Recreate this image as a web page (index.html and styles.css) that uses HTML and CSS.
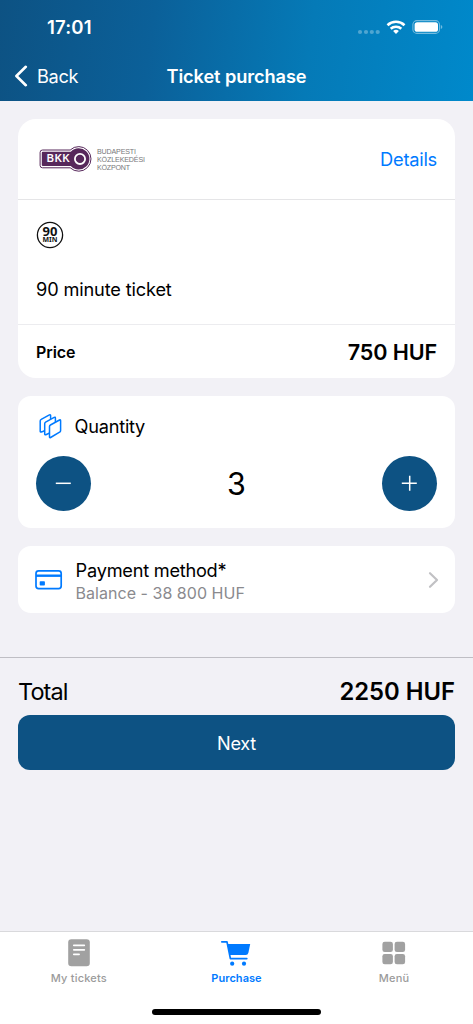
FILE: index.html
```html
<!DOCTYPE html>
<html lang="en">
<head>
<meta charset="utf-8">
<title>Ticket purchase</title>
<link rel="stylesheet" href="styles.css">
</head>
<body>
<div class="screen">
  <header class="header">
    <div class="status">
      <span class="clock">17:01</span>
      <svg class="status-icons" width="88" height="18" viewBox="0 0 88 18" fill="#fff">
        <g opacity=".3"><circle cx="4" cy="14" r="2.1"/><circle cx="10" cy="14" r="2.1"/><circle cx="15.8" cy="14" r="2.1"/><circle cx="21.7" cy="14" r="2.1"/></g>
        <g fill="none" stroke="#fff" stroke-width="2.6"><path d="M31.5 7.2a12.3 12.3 0 0 1 17 0"/><path d="M34.7 10.8a7.7 7.7 0 0 1 10.6 0"/></g>
        <path d="M40 16l-2.9-3a4.3 4.3 0 0 1 5.8 0z"/>
        <rect x="56.9" y="2.6" width="26.6" height="12.8" rx="4" fill="none" stroke="#fff" stroke-opacity=".45" stroke-width="1.1"/>
        <rect x="58.6" y="4.2" width="23.4" height="9.6" rx="2.6"/>
        <path d="M84.8 6.9q1.6.6 1.6 2.1t-1.6 2.1z" opacity=".45"/>
      </svg>
    </div>
    <nav class="navbar">
      <a class="back"><svg width="14" height="22" viewBox="0 0 14 22" fill="none" stroke="#fff" stroke-width="2.6" stroke-linecap="round" stroke-linejoin="round"><path d="M11.8 1.8L2.4 11l9.4 9.2"/></svg><span>Back</span></a>
      <h1 class="title">Ticket purchase</h1>
    </nav>
  </header>

  <main class="content">
    <section class="card ticket">
      <div class="operator">
        <svg class="logo" width="110" height="28" viewBox="0 0 110 28">
          <path fill="#fff" stroke="#57285b" stroke-width="1" d="M3.5 5H31.2A12.3 12.3 0 1 1 31.2 22.8H3.5Q1.1 22.8 1.1 20.4V7.4Q1.1 5 3.5 5Z"/>
          <path fill="#57285b" d="M3.9 6.7H31.8A10.7 10.7 0 1 1 31.8 21.1H3.9Q2.8 21.1 2.8 20V7.8Q2.8 6.7 3.9 6.7Z"/>
          <circle cx="41" cy="13.9" r="5.1" fill="none" stroke="#fff" stroke-width="1.8"/>
          <text class="logo-mark" x="7.8" y="17.2" textLength="23">BKK</text>
          <g class="logo-name"><text x="58" y="8.6" textLength="39">BUDAPESTI</text><text x="58" y="16.6" textLength="48">KÖZLEKEDÉSI</text><text x="58" y="24.6" textLength="33">KÖZPONT</text></g>
        </svg>
        <a class="details">Details</a>
      </div>
      <div class="product">
        <svg class="duration" width="28" height="28" viewBox="0 0 28 28"><circle cx="14" cy="14" r="12.6" fill="none" stroke="#111" stroke-width="1.3"/><text class="dur" text-anchor="middle"><tspan class="dur-num" x="14" y="15">90</tspan><tspan class="dur-unit" x="14" y="21.4">MIN</tspan></text></svg>
        <div class="product-name">90 minute ticket</div>
      </div>
      <div class="price"><span class="price-label">Price</span><span class="price-value">750 HUF</span></div>
    </section>

    <section class="card quantity">
      <div class="quantity-head">
        <svg width="28" height="28" viewBox="0 0 28 28" fill="#fff" stroke="#007aff" stroke-width="1.5" stroke-linejoin="round"><path d="M5.2 7.4L13.4 2.9Q14.6 2.4 14.6 3.6V15L7.5 19.2L5.2 20Q4.2 20.3 4.2 19.2V9Q4.2 7.9 5.2 7.4Z"/><path d="M9.6 10.1L18.2 5.4Q19.4 4.8 19.4 6V17L12 21.8L9.8 22.7Q8.7 23 8.7 21.9V11.8Q8.7 10.6 9.6 10.1Z"/><path d="M14.4 13L23.5 8Q24.6 7.5 24.6 8.7V18.4Q24.6 19.6 23.6 20.2L14.6 25.5Q13.5 26 13.5 24.9V14.6Q13.5 13.5 14.4 13Z"/></svg>
        <span>Quantity</span>
      </div>
      <div class="stepper">
        <button class="round" aria-label="Decrease"><svg width="17" height="17" viewBox="0 0 17 17" stroke="#fff" stroke-width="1.5"><path d="M.8 8.3h15"/></svg></button>
        <span class="amount">3</span>
        <button class="round" aria-label="Increase"><svg width="17" height="17" viewBox="0 0 17 17" stroke="#fff" stroke-width="1.5"><path d="M.8 8.3h15M8.7.8v15"/></svg></button>
      </div>
    </section>

    <section class="card payment">
      <svg class="card-icon" width="28" height="22" viewBox="0 0 28 22"><rect x="1" y="1.9" width="25.2" height="17.8" rx="2.6" fill="none" stroke="#007aff" stroke-width="1.7"/><path d="M1 6.7h25.2" stroke="#007aff" stroke-width="2.4"/><rect x="4.7" y="12.3" width="5.2" height="4.2" rx=".8" fill="#007aff"/></svg>
      <div class="payment-text"><div class="method">Payment method*</div><div class="balance">Balance - 38 800 HUF</div></div>
      <svg class="chevron" width="11" height="18" viewBox="0 0 11 18" fill="none" stroke="#c1c1c4" stroke-width="2.2" stroke-linecap="round" stroke-linejoin="round"><path d="M2 2.2L9 9l-7 6.8"/></svg>
    </section>
  </main>

  <section class="checkout">
    <div class="total"><span class="total-label">Total</span><span class="total-value">2250 HUF</span></div>
    <button class="next">Next</button>
  </section>

  <footer class="tabbar">
    <div class="tabs">
      <a class="tab"><svg width="32" height="32" viewBox="0 0 32 32"><rect x="5.2" y="3.2" width="21.6" height="27" rx="3.2" fill="#a1a1a1"/><path d="M10.8 9.3h10.5M10.8 13.8h10.5M10.8 18.3h5.3" stroke="#fff" stroke-width="1.7" stroke-linecap="round"/></svg><span>My tickets</span></a>
      <a class="tab active"><svg width="32" height="32" viewBox="0 0 32 32" fill="#007aff"><path d="M1.8 5.8H7L10.4 22.6H26.8" fill="none" stroke="#007aff" stroke-width="1.7" stroke-linejoin="round" stroke-linecap="round"/><path d="M7.5 8H30.2L28.4 16.7Q27.9 18.9 25.7 18.9H9.8Z"/><circle cx="12.2" cy="27.7" r="2.1"/><circle cx="24" cy="27.7" r="2.1"/></svg><span>Purchase</span></a>
      <a class="tab"><svg width="32" height="32" viewBox="0 0 32 32" fill="#a1a1a1"><rect x="4.4" y="5.7" width="10.5" height="10.3" rx="2.3"/><rect x="16.6" y="5.7" width="10.5" height="10.3" rx="2.3"/><rect x="4.4" y="17.9" width="10.5" height="10.3" rx="2.3"/><rect x="16.6" y="17.9" width="10.5" height="10.3" rx="2.3"/></svg><span>Menü</span></a>
    </div>
    <div class="home-indicator"></div>
  </footer>
</div>
</body>
</html>
```
FILE: styles.css
```css
* { box-sizing: border-box; }
body { margin: 0; font-family: Inter, "Liberation Sans", sans-serif; color: #000; }
button { border: 0; padding: 0; font: inherit; color: #fff; background: #0d5283; }
svg { display: block; flex: none; }
.screen { width: 473px; height: 1024px; display: flex; flex-direction: column; background: #f2f1f6; overflow: hidden; }
.header { height: 101px; color: #fff; background: linear-gradient(97deg, #0d5283 0%, #0b6099 32%, #057ab7 65%, #0089cb 100%); }
.status { height: 54px; padding: 0 29px 0 47px; display: flex; justify-content: space-between; align-items: center; }
.clock { font-size: 18.6px; font-weight: 600; letter-spacing: .15px; }
.navbar { height: 44px; display: grid; grid-template-columns: 1fr auto 1fr; align-items: center; padding: 0 14px; }
.back { display: flex; align-items: center; gap: 9px; font-size: 18.2px; letter-spacing: -.35px; }
.title { margin: 0; font-size: 18.2px; font-weight: 600; letter-spacing: -.08px; }
.content { padding: 17.6px 18px 0; height: 556px; display: flex; flex-direction: column; gap: 17.8px; }
.card { background: #fff; border-radius: 13px; }
.ticket { height: 259.4px; border-radius: 18px; }
.operator { height: 81px; padding: 0 18px 0 21px; border-bottom: 1px solid #e5e5e7; display: flex; justify-content: space-between; align-items: center; }
.logo-mark { font: 700 10px "Liberation Sans", Arial, sans-serif; fill: #fff; }
.logo-name { font: 7.1px "Liberation Sans", Arial, sans-serif; fill: #77777a; }
.details { color: #007aff; font-size: 18.3px; letter-spacing: -.25px; }
.product { height: 125px; padding: 20px 18px 0; border-bottom: 1px solid #ececef; }
.duration { margin: 1.4px 0 0 -.4px; }
.dur { fill: #111; font-family: "Noto Sans", sans-serif; font-weight: 700; }
.dur-num { font-size: 13px; }
.dur-unit { font-size: 7px; }
.product-name { margin-top: 28.6px; font-size: 18.2px; line-height: 22px; letter-spacing: -.15px; }
.price { height: 54px; padding: 0 18px; display: flex; justify-content: space-between; align-items: center; }
.price-label { font-size: 16px; font-weight: 600; letter-spacing: -.1px; }
.price-value { font-size: 21.6px; font-weight: 600; letter-spacing: -.13px; }
.quantity { height: 132.6px; padding: 15px 18px 0; }
.quantity-head { height: 30px; display: flex; align-items: center; gap: 10.6px; font-size: 18.2px; letter-spacing: -.25px; }
.stepper { margin-top: 15px; display: flex; justify-content: space-between; align-items: center; }
.round { width: 55px; height: 55px; border-radius: 50%; display: grid; place-items: center; }
.amount { font-size: 30.5px; }
.payment { height: 66.4px; padding: 0 16px 0 17px; display: flex; align-items: center; }
.card-icon, .chevron { margin-top: 1px; }
.payment-text { flex: 1; margin: 5px 0 0 12.6px; }
.method { font-size: 18.2px; line-height: 23px; letter-spacing: -.25px; }
.balance { font-size: 16px; line-height: 23px; color: #8a8a8e; letter-spacing: .03px; }
.checkout { border-top: 1px solid #bfbec4; padding: 17px 18px 0; flex: 1; }
.total { height: 33px; display: flex; justify-content: space-between; align-items: center; margin-bottom: 7.4px; }
.total-label { font-size: 23.5px; letter-spacing: -.9px; }
.total-value { font-size: 23.8px; font-weight: 600; }
.next { display: block; width: 100%; height: 55px; border-radius: 12px; font-size: 18.2px; letter-spacing: -.3px; }
.tabbar { height: 93px; background: #fff; border-top: 1px solid #d9d9dc; }
.tabs { display: grid; grid-template-columns: repeat(3, 1fr); height: 77px; padding-top: 4px; }
.tab { display: flex; flex-direction: column; align-items: center; gap: 3px; color: #9b9b9b; font-size: 11px; line-height: 15px; font-weight: 500; letter-spacing: .22px; }
.active { color: #007aff; font-weight: 600; letter-spacing: .05px; }
.home-indicator { width: 169px; height: 6px; margin: 0 auto; border-radius: 3px; background: #000; }
```
